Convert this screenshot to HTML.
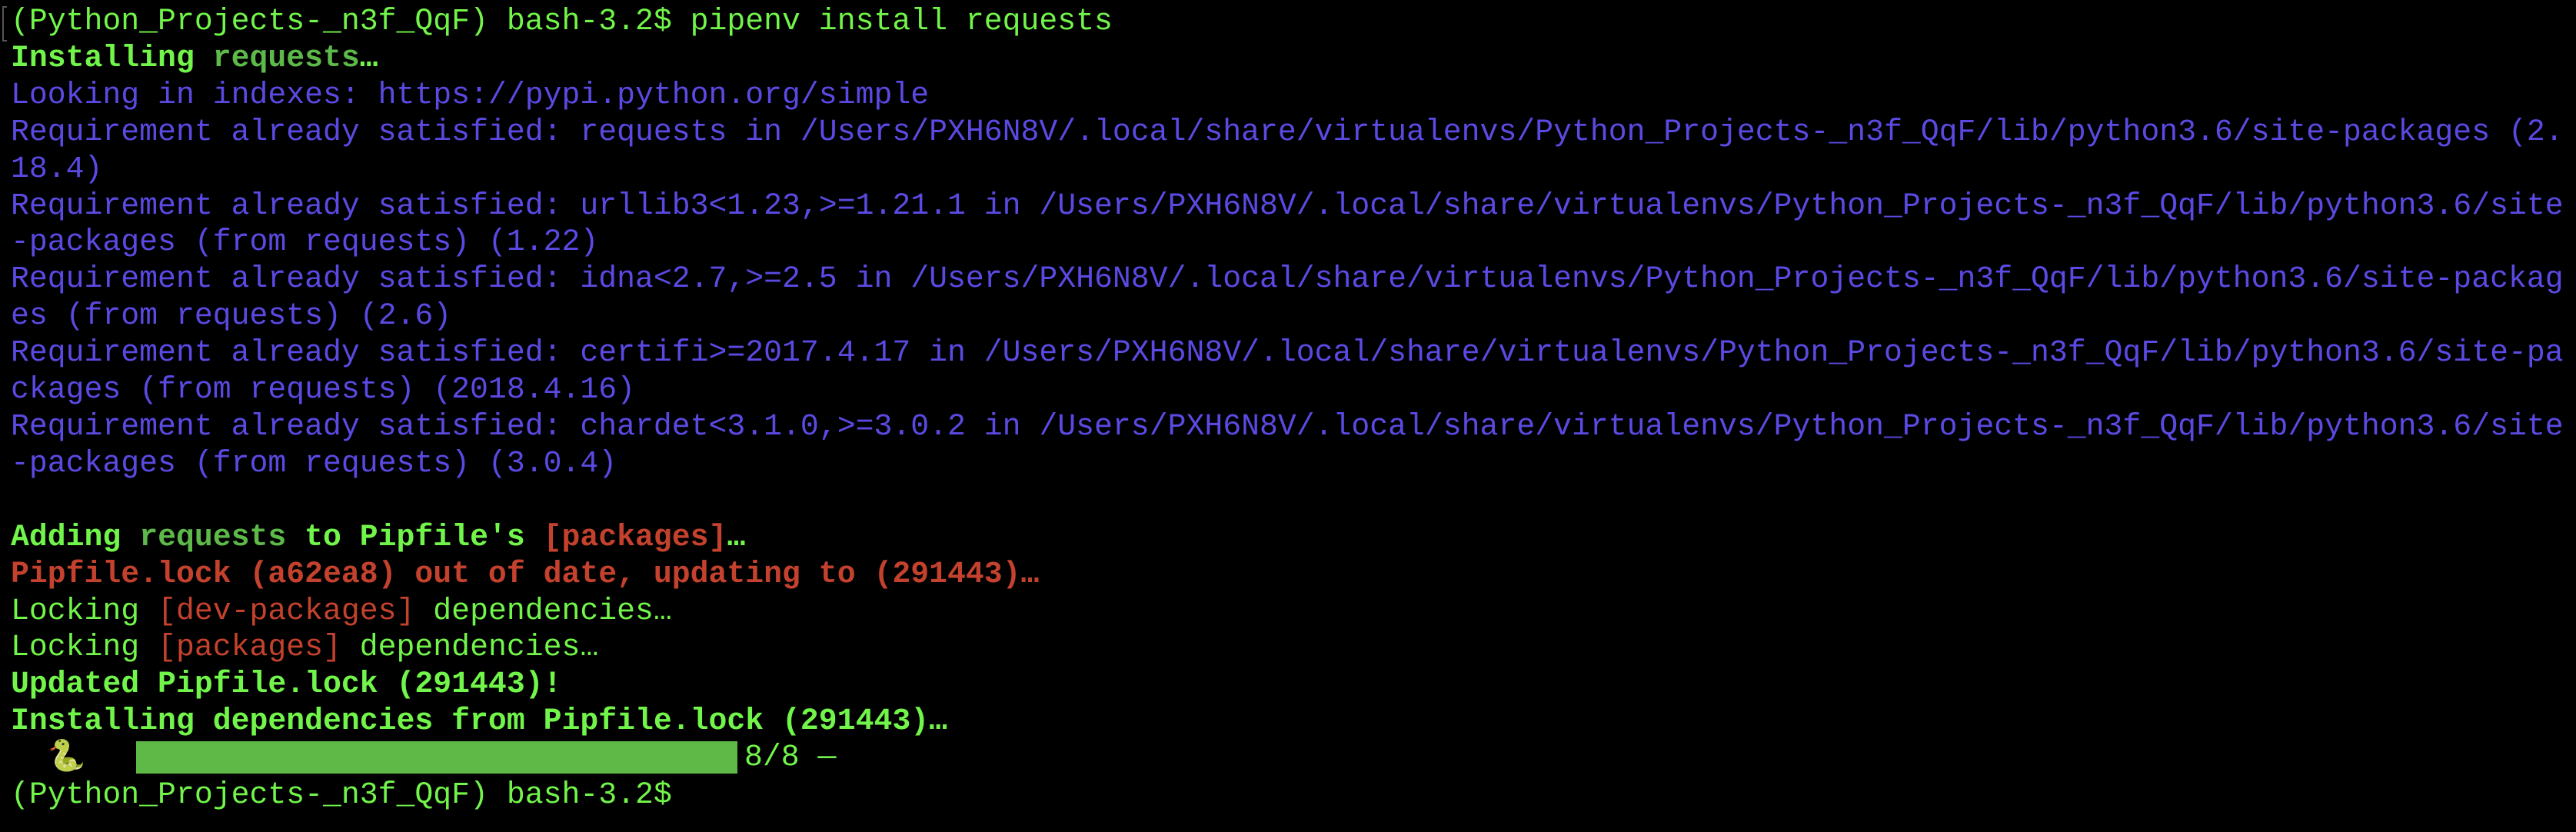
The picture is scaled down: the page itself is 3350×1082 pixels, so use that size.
<!DOCTYPE html>
<html><head><meta charset="utf-8"><style>
html,body{margin:0;padding:0;background:#000;width:3350px;height:1082px;overflow:hidden}
pre{margin:0;position:absolute;left:14px;top:4px;font-family:"Liberation Mono",monospace;font-size:39.8px;line-height:47.9px;color:#72f54a;white-space:pre;z-index:2}
.b{color:#5a4ae3}.g{color:#5db94a}.o{color:#c4422d}.s{font-weight:bold}
.bar{position:absolute;left:177px;top:964px;width:782px;height:42px;background:#5fb946;z-index:1}
.pt{position:absolute;left:968px;top:961px;font-family:"Liberation Mono",monospace;font-size:39.8px;line-height:47.9px;color:#72f54a;white-space:pre;z-index:3}
.cur{position:absolute;left:3px;top:8px;width:4px;height:42px;border:2px solid #555;border-right:none}
</style></head><body>
<div class="cur"></div>
<div class="bar"></div>
<pre>(Python_Projects-_n3f_QqF) bash-3.2$ pipenv install requests
<span class="s">Installing <span class="g">requests</span>…</span>
<span class="b">Looking in indexes: https://pypi.python.org/simple
Requirement already satisfied: requests in /Users/PXH6N8V/.local/share/virtualenvs/Python_Projects-_n3f_QqF/lib/python3.6/site-packages (2.
18.4)
Requirement already satisfied: urllib3&lt;1.23,&gt;=1.21.1 in /Users/PXH6N8V/.local/share/virtualenvs/Python_Projects-_n3f_QqF/lib/python3.6/site
-packages (from requests) (1.22)
Requirement already satisfied: idna&lt;2.7,&gt;=2.5 in /Users/PXH6N8V/.local/share/virtualenvs/Python_Projects-_n3f_QqF/lib/python3.6/site-packag
es (from requests) (2.6)
Requirement already satisfied: certifi&gt;=2017.4.17 in /Users/PXH6N8V/.local/share/virtualenvs/Python_Projects-_n3f_QqF/lib/python3.6/site-pa
ckages (from requests) (2018.4.16)
Requirement already satisfied: chardet&lt;3.1.0,&gt;=3.0.2 in /Users/PXH6N8V/.local/share/virtualenvs/Python_Projects-_n3f_QqF/lib/python3.6/site
-packages (from requests) (3.0.4)</span>

<span class="s">Adding <span class="g">requests</span> to Pipfile's <span class="o">[packages]</span>…</span>
<span class="s o">Pipfile.lock (a62ea8) out of date, updating to (291443)…</span>
Locking <span class="o">[dev-packages]</span> dependencies…
Locking <span class="o">[packages]</span> dependencies…
<span class="s">Updated Pipfile.lock (291443)!</span>
<span class="s">Installing dependencies from Pipfile.lock (291443)…</span>
  <span style="color:#a8b85a">🐍</span>
(Python_Projects-_n3f_QqF) bash-3.2$</pre>
<div class="pt">8/8 —</div>
</body></html>
